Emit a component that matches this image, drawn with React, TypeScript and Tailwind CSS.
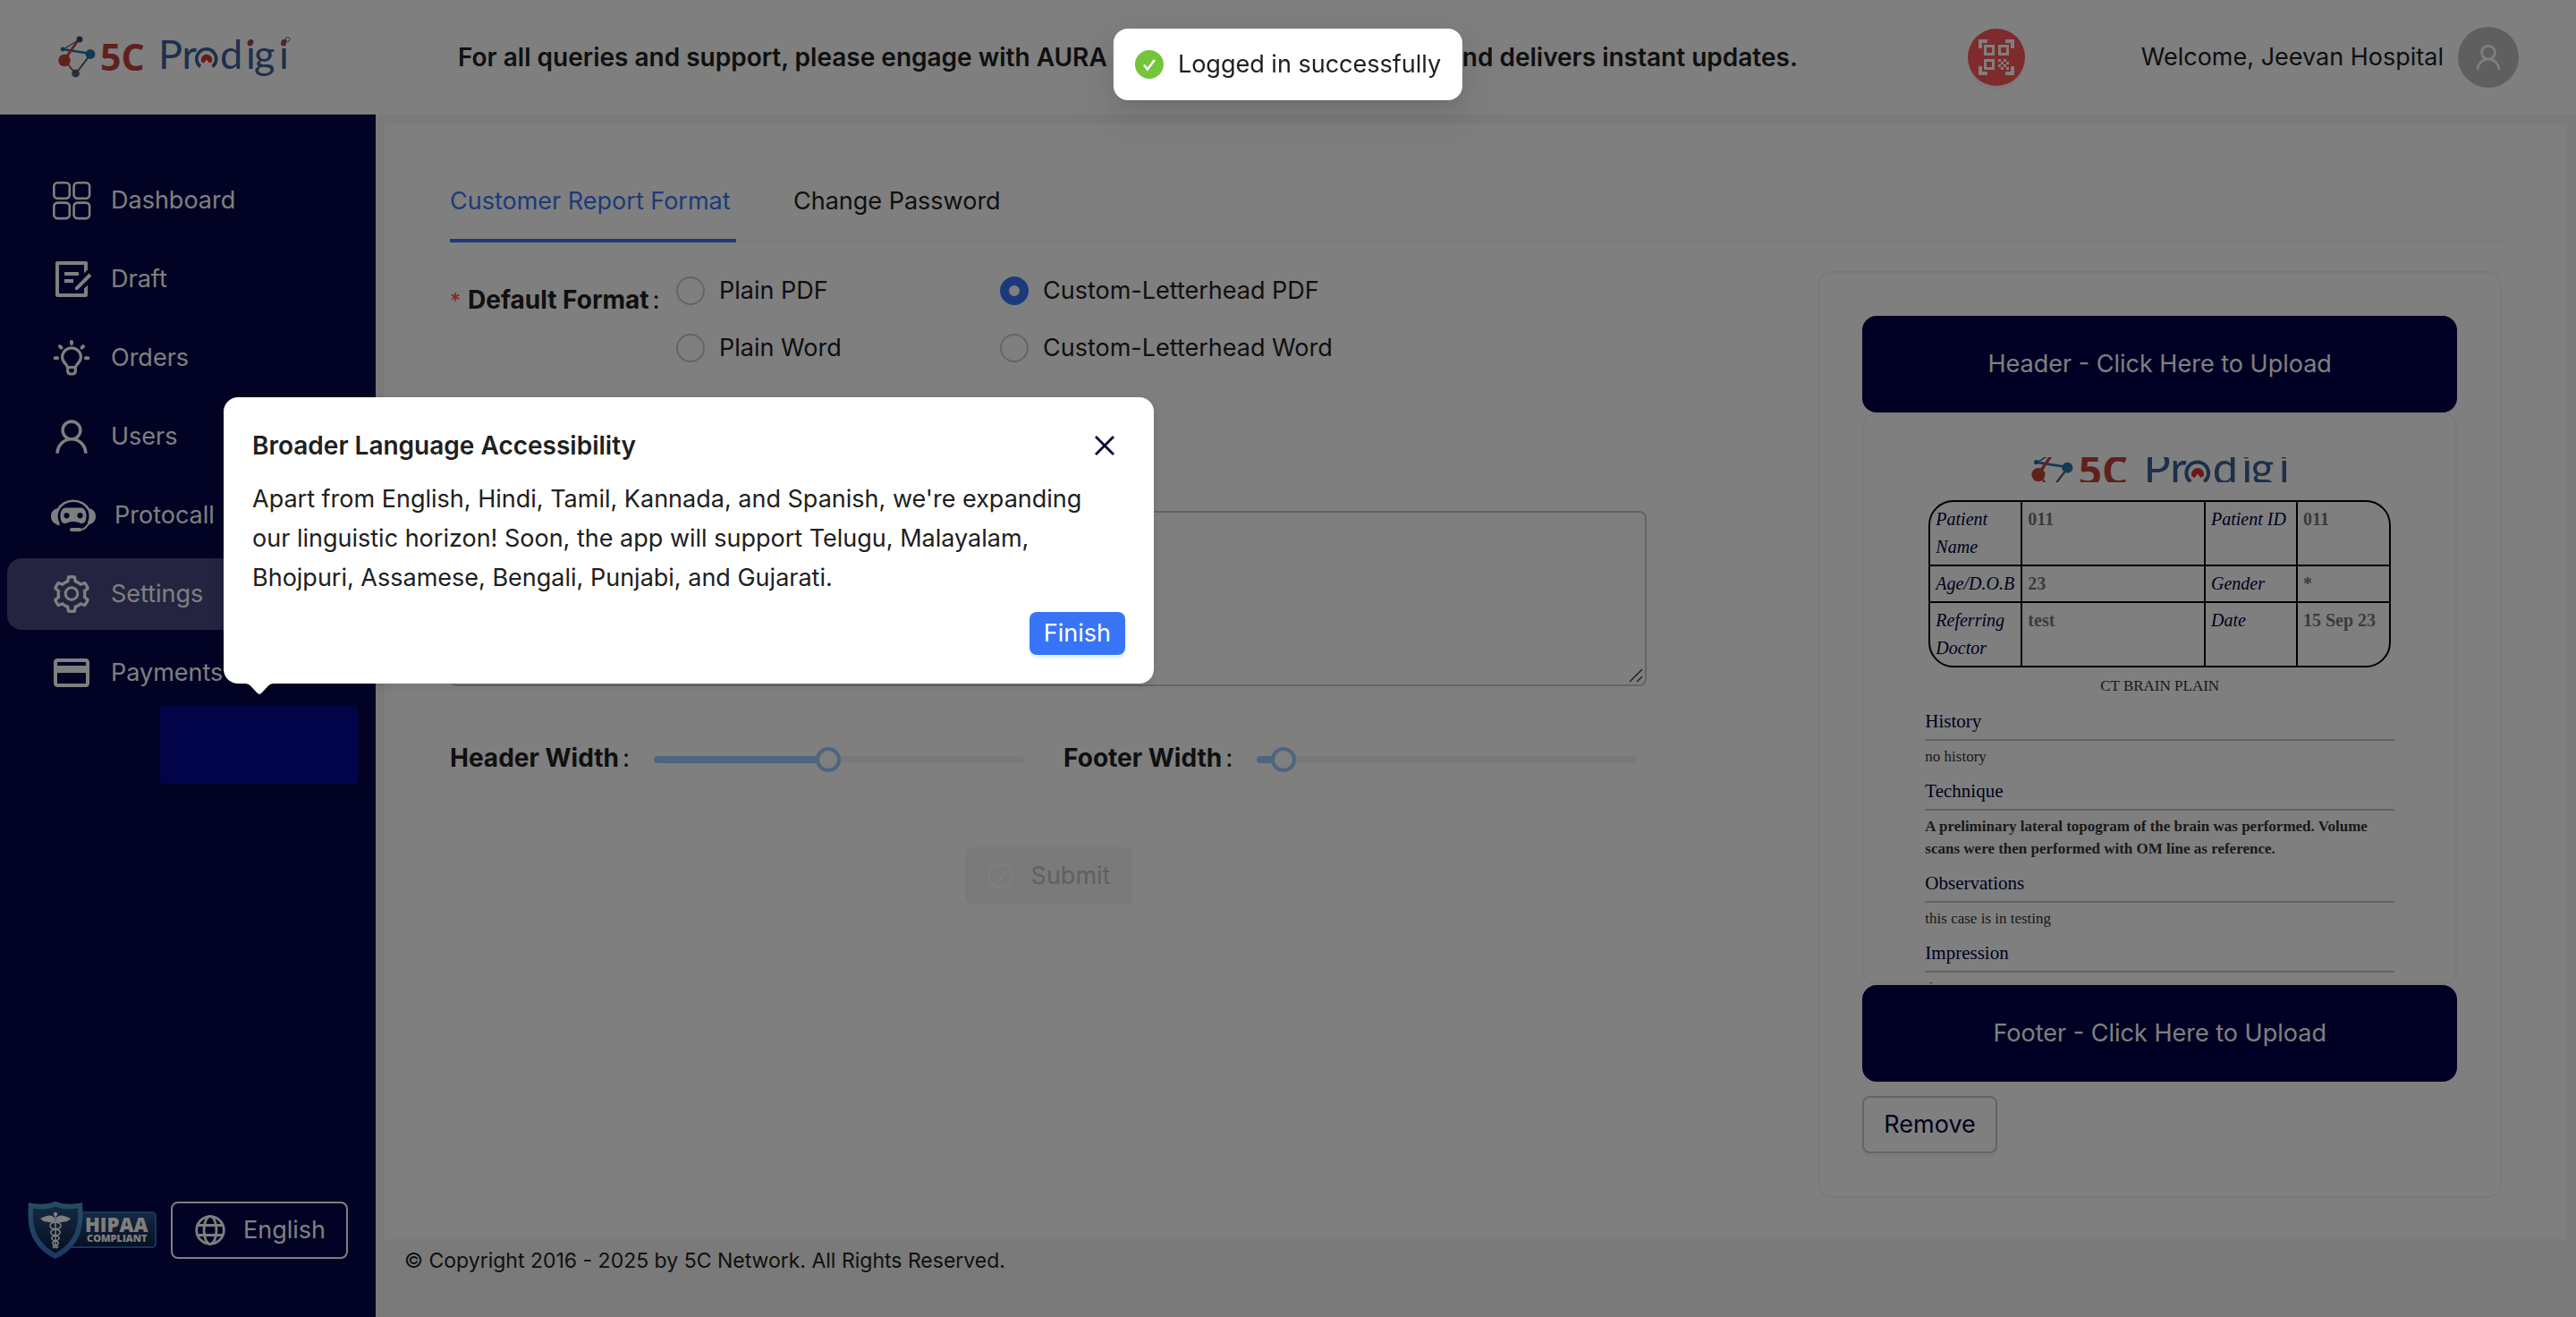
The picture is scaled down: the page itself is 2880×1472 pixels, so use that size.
import React, { useState } from "react";
import { AiOutlineUser, AiOutlineSetting } from "react-icons/ai";
import { MdOutlineCreditCard, MdQrCodeScanner } from "react-icons/md";
import { RiDraftLine } from "react-icons/ri";

function ProdigiMark() {
  return (
    <>
      <path d="M39 20L21 31" stroke="#2a6a96" strokeWidth="1.4" />
      <path d="M20 31L51 36" stroke="#2675ab" strokeWidth="2.4" />
      <path d="M38 20L22 43" stroke="#c9433a" strokeWidth="3" />
      <path d="M22 43L34 58" stroke="#c9433a" strokeWidth="2" />
      <path d="M51 37L35 58" stroke="#555" strokeWidth="2" />
      <circle cx="39" cy="20" r="3.4" fill="#264f78" />
      <circle cx="20" cy="31" r="2.4" fill="#2a6a96" />
      <circle cx="51" cy="36.500" r="5.400" fill="#2675ab" />
      <circle cx="22" cy="43.500" r="6.800" fill="#c1423a" />
      <circle cx="34.500" cy="58" r="4.400" fill="#555c60" />
      <text x="62" y="55" fill="#c1423a" fontFamily="Open Sans, sans-serif" fontWeight="700" fontSize="41">
        5C
      </text>
      <g fill="#3b6196" fontFamily="Lato, sans-serif" fontSize="45">
        <text x="127" y="53">Pr</text>
        <text x="196" y="53">d</text>
        <text x="225" y="53">i</text>
        <text x="234" y="53">g</text>
        <text x="262" y="53">i</text>
      </g>
      <path d="M174 50.500a11 11 0 1 1 13.500 0" fill="none" stroke="#3b6196" strokeWidth="3.600" />
      <path d="M175 45a6.300 6.300 0 1 1 12 0l-3 1.500-3-4-3 4z" fill="#d8332f" />
      <circle cx="229.500" cy="24.500" r="3" fill="#d8332f" />
      <circle cx="267" cy="24.500" r="3" fill="#d8332f" />
    </>
  );
}

function HeaderLogo() {
  return (
    <svg viewBox="0 0 300 80" className="h-20 w-[300px] shrink-0" role="img" aria-label="5C Prodigi">
      <ProdigiMark />
      <circle cx="271.500" cy="20" r="2.500" fill="none" stroke="#444" strokeWidth="0.800" />
    </svg>
  );
}

function GridIcon() {
  return (
    <svg viewBox="0 0 48 48" className="size-12" fill="none" stroke="currentColor" strokeWidth="2.600">
      <rect x="4.300" y="4.300" width="17.500" height="17.500" rx="4" />
      <rect x="26.600" y="4.300" width="17.500" height="17.500" rx="4" />
      <rect x="4.300" y="26.600" width="17.500" height="17.500" rx="4" />
      <rect x="26.600" y="26.600" width="17.500" height="17.500" rx="4" />
    </svg>
  );
}

function BulbIcon() {
  return (
    <svg viewBox="0 0 48 48" className="size-12" fill="none" stroke="currentColor" strokeWidth="3.200">
      <path d="M19.500 34.500C19.500 31 13.600 29.500 13.600 23.300a10.400 10.400 0 0 1 20.800 0c0 6.200-5.900 7.700-5.900 11.200z" strokeLinejoin="round" />
      <path d="M19.700 34.500v4.500a3 3 0 0 0 3 3h2.600a3 3 0 0 0 3-3v-4.500" />
      <path d="M24 6v2M5.700 24.300h2.400M39.900 24.300h2.400M11 11.200l1.500 1.500M37 11.200l-1.500 1.500" strokeWidth="4" strokeLinecap="round" />
    </svg>
  );
}

function RobotIcon() {
  return (
    <svg viewBox="0 0 52 48" className="h-12 w-[52px]" fill="currentColor">
      <path d="M9 17.500A18.500 16 0 0 1 43 17.500" fill="none" stroke="currentColor" strokeWidth="2.600" />
      <path d="M9.500 16C5 16.500 1 19.500 1 25c0 5.500 3.500 8.500 9.500 10.500V32c-1.200-2-1.800-4.500-1.800-7s.6-5 1.800-7zM42.500 16c4.500.5 8.500 3.500 8.500 9 0 5.500-3.500 8.500-8 9.500l-1-3c1-2 1.500-4 1.500-6.500s-.4-5-1.500-7z" />
      <path d="M44 31c-2 6-6 9-12 9.500" fill="none" stroke="currentColor" strokeWidth="2.200" />
      <rect x="22" y="38" width="13" height="4" rx="2" />
      <path fillRule="evenodd" d="M18 15.500h16c4.500 0 6.500 4 6.500 9s-1.500 8.500-5 8.500c-3 0-4-2-9.500-2s-6.500 2-9.500 2c-3.500 0-5-3.500-5-8.500s2-9 6.500-9zm.5 5.500a3.200 3.200 0 1 0 .01 0zm15 0a3.200 3.200 0 1 0 .01 0z" />
    </svg>
  );
}

function GlobeIcon() {
  return (
    <svg viewBox="0 0 34 34" className="size-[34px]" fill="none" stroke="currentColor" strokeWidth="2.800">
      <circle cx="17" cy="17" r="15.300" />
      <ellipse cx="17" cy="17" rx="7" ry="15.300" />
      <path d="M3 11.500h28M3 22.500h28" />
    </svg>
  );
}

function HipaaBadge() {
  return (
    <svg viewBox="0 0 144 66" className="h-[66px] w-36 shrink-0" role="img" aria-label="HIPAA Compliant">
      <defs>
        <linearGradient id="rim" x1="0" y1="0" x2="0" y2="1">
          <stop offset="0" stopColor="#4a9bc4" />
          <stop offset="1" stopColor="#3a6fc8" />
        </linearGradient>
        <linearGradient id="field" x1="0" y1="0" x2="0" y2="1">
          <stop offset="0" stopColor="#2a5488" />
          <stop offset="1" stopColor="#0c1f40" />
        </linearGradient>
      </defs>
      <rect x="42" y="13" width="101" height="39" rx="4" fill="url(#field)" stroke="#2f66b4" strokeWidth="2" />
      <path d="M31 0.500C24 4.500 10 4.500 1 2 0 18 0 32 7 44c6 10 15 17 24 21 9-4 18-11 24-21 7-12 7-26 6-42-9 2.500-23 2.500-30-1.500z" fill="url(#rim)" />
      <path d="M31 6.500C24 9.500 14 10 6 8.500 5.500 21 6 31 12 41c5 8 12 14 19 17.500C38 55 45 49 50 41c6-10 6.500-20 6-32.500-8 1.500-18 1-25-2z" fill="url(#field)" />
      <g stroke="#fff" fill="none" strokeWidth="1.500">
        <path d="M31 15v38" />
        <path d="M31 24c-8 1-8 7 0 8s6 6 0 7-5 5 0 6 4 4 0 5-3 2-1 3M31 24c8 1 8 7 0 8s-6 6 0 7 5 5 0 6-4 4 0 5 3 2 1 3" />
      </g>
      <circle cx="31" cy="15" r="2.200" fill="#fff" />
      <path d="M30 19c-4-4-8-3-16 1 3 3 5 3.500 8 3.500 1 1 5 1 8 0zM32 19c4-4 8-3 16 1-3 3-5 3.500-8 3.500-1 1-5 1-8 0z" fill="#fff" />
      <g fill="#fff" fontFamily="Open Sans, sans-serif" fontWeight="800">
        <text x="64" y="35" fontSize="22">HIPAA</text>
        <text x="66" y="46" fontSize="11">COMPLIANT</text>
      </g>
    </svg>
  );
}

const menu = [
  { label: "Dashboard", icon: <GridIcon /> },
  { label: "Draft", icon: <RiDraftLine size={48} /> },
  { label: "Orders", icon: <BulbIcon /> },
  { label: "Users", icon: <AiOutlineUser size={48} /> },
  { label: "Protocall", icon: <RobotIcon /> },
  { label: "Settings", icon: <AiOutlineSetting size={48} />, active: true },
  { label: "Payments", icon: <MdOutlineCreditCard size={48} /> },
];

function Sidebar() {
  return (
    <aside className="flex w-[420px] shrink-0 flex-col justify-between bg-[#020449] pt-[52px] pb-16 text-white">
      <nav className="flex flex-col gap-2 px-2 pt-1">
        {menu.map((item) => (
          <a
            key={item.label}
            href={"#" + item.label.toLowerCase()}
            className={
              item.active
                ? "flex h-20 items-center gap-5 rounded-2xl bg-[#484880] pl-12"
                : "flex h-20 items-center gap-5 rounded-2xl pl-12"
            }
          >
            {item.icon}
            <span>{item.label}</span>
          </a>
        ))}
      </nav>
      <div className="flex items-center gap-4 pl-[31px]">
        <HipaaBadge />
        <button type="button" className="flex h-16 w-[198px] items-center gap-5 rounded-lg border-2 border-white pl-[25px]">
          <GlobeIcon />
          English
        </button>
      </div>
    </aside>
  );
}

function Header() {
  return (
    <header className="flex h-32 items-center bg-white pr-16 pl-[50px]">
      <HeaderLogo />
      <p className="ml-[162px] text-[28px] font-semibold whitespace-nowrap">
        For all queries and support, please engage with AURA - our AI agent that resolves and delivers instant updates.
      </p>
      <button
        type="button"
        aria-label="Scan QR code"
        className="ml-auto flex size-16 items-center justify-center rounded-full bg-[#fa5659] text-white shadow-[0_4px_0_rgba(255,38,5,0.06)]"
      >
        <MdQrCodeScanner size={48} />
      </button>
      <span className="ml-[130px] whitespace-nowrap">Welcome, Jeevan Hospital</span>
      <button type="button" aria-label="Account" className="ml-4 flex size-[68px] items-center justify-center rounded-full bg-[#bfbfbf] text-white">
        <AiOutlineUser size={36} />
      </button>
    </header>
  );
}

const formats = ["Plain PDF", "Custom-Letterhead PDF", "Plain Word", "Custom-Letterhead Word"];

function FormatPicker() {
  const [format, setFormat] = useState(formats[1]);
  return (
    <fieldset className="flex">
      <legend className="float-left w-[253px] text-[28px] leading-16 font-bold">
        <span className="mr-2 text-2xl font-normal text-[#ff4d4f]">*</span>
        Default Format
        <span className="ml-1 font-normal">:</span>
      </legend>
      <div className="grid grid-cols-[362px_auto] gap-y-5">
        {formats.map((name) => (
          <label key={name} className="flex items-center gap-4 leading-11">
            <input
              type="radio"
              name="format"
              checked={format === name}
              onChange={() => setFormat(name)}
              className="size-8 appearance-none rounded-full border-2 border-[#c8c8c8] bg-white checked:border-[10px] checked:border-[#3875f6]"
            />
            {name}
          </label>
        ))}
      </div>
    </fieldset>
  );
}

function WidthSlider({ id, label, initial, labelClass }: { id: string; label: string; initial: number; labelClass: string }) {
  const [value, setValue] = useState(initial);
  return (
    <div className="flex h-16 items-center">
      <label htmlFor={id} className={labelClass}>
        {label}
        <span className="ml-1 font-normal">:</span>
      </label>
      <input
        id={id}
        type="range"
        min={0}
        max={100}
        value={value}
        onChange={(e) => setValue(Number(e.target.value))}
        style={{ backgroundImage: `linear-gradient(to right, #9bcaff ${value}%, #f3f3f3 ${value}%)` }}
        className="mt-1 h-2 min-w-0 flex-1 appearance-none rounded-full [&::-webkit-slider-thumb]:size-7 [&::-webkit-slider-thumb]:appearance-none [&::-webkit-slider-thumb]:rounded-full [&::-webkit-slider-thumb]:border-4 [&::-webkit-slider-thumb]:border-[#9bcaff] [&::-webkit-slider-thumb]:bg-white"
      />
    </div>
  );
}

function SettingsForm() {
  return (
    <form className="w-7/12">
      <FormatPicker />
      <div className="relative mt-40">
        <textarea
          aria-label="Signature"
          className="block h-[196px] w-full resize-none rounded-lg border-2 border-[#c8c8c8] bg-white"
        />
        <svg viewBox="0 0 20 20" className="absolute right-0.5 bottom-0.5 size-5" stroke="#444" strokeWidth="1.500">
          <path d="M3 17L17 3M11 17l6-6" />
        </svg>
      </div>
      <div className="mt-12 grid grid-cols-2 gap-x-11 pr-2.5">
        <WidthSlider id="header-width" label="Header Width" initial={47} labelClass="w-[228px] shrink-0 text-[28px] font-bold" />
        <WidthSlider id="footer-width" label="Footer Width" initial={4} labelClass="w-[216px] shrink-0 text-[28px] font-bold" />
      </div>
      <div className="mt-17 flex justify-center">
        <button type="submit" disabled className="flex h-16 w-[187px] items-center gap-[18px] rounded-lg border-2 border-[#f3f3f3] bg-[#f5f5f5] pl-[22px] text-[#c0c0c0]">
          <svg viewBox="0 0 32 32" className="size-8" fill="none" stroke="#fff" strokeWidth="2">
            <circle cx="16" cy="16" r="13.500" />
            <path d="M10.500 16l4 5 7-10" />
          </svg>
          Submit
        </button>
      </div>
    </form>
  );
}

const patientRows = [
  ["Patient Name", "011", "Patient ID", "011"],
  ["Age/D.O.B", "23", "Gender", "*"],
  ["Referring Doctor", "test", "Date", "15 Sep 23"],
];

const sections = [
  { title: "History", body: "no history" },
  {
    title: "Technique",
    body: "A preliminary lateral topogram of the brain was performed. Volume scans were then performed with OM line as reference.",
    bold: true,
  },
  { title: "Observations", body: "this case is in testing" },
  { title: "Impression", body: "this case is in testing" },
];

function ReportPreview() {
  return (
    <div className="h-[640px] overflow-hidden rounded-2xl border-2 border-[#f5f5f5] px-[68px] pt-12 font-[Liberation_Serif,serif]">
      <svg viewBox="15 26 257 25" className="mx-auto h-7 w-[288px]" role="img" aria-label="5C Prodigi">
        <ProdigiMark />
      </svg>
      <div className="mx-1 mt-5 overflow-hidden rounded-[28px] border-2 border-black">
        <table className="w-full table-fixed border-collapse text-xl leading-[31px]">
          <colgroup>
            <col className="w-[102px]" />
            <col />
            <col className="w-[103px]" />
            <col className="w-[103px]" />
          </colgroup>
          <tbody>
            {patientRows.map((row) => (
              <tr key={row[0]} className="border-b-2 border-black last:border-b-0">
                {row.map((cell, i) =>
                  i % 2 === 0 ? (
                    <th key={i} scope="row" className="border-r-2 border-black py-1 pl-1.5 text-left align-top font-normal text-[#000038] italic">
                      {cell}
                    </th>
                  ) : (
                    <td key={i} className="border-r-2 border-black py-1 pl-1.5 align-top font-bold text-[#777] last:border-r-0">
                      {cell}
                    </td>
                  ),
                )}
              </tr>
            ))}
          </tbody>
        </table>
      </div>
      <p className="mt-2 text-center text-[17px] leading-[25px] text-[#333]">CT BRAIN PLAIN</p>
      <div className="mt-[11px] flex flex-col gap-2.5">
        {sections.map((s) => (
          <section key={s.title}>
            <h3 className="border-b-2 border-[#c8c8c8] pb-[3px] text-[21px] leading-[33px] text-[#000038]">{s.title}</h3>
            <p
              className={
                s.bold
                  ? "mt-[5px] text-[17px] leading-[25px] font-bold text-[#333]"
                  : "mt-[5px] text-[17px] leading-[25px] text-[#333]"
              }
            >
              {s.body}
            </p>
          </section>
        ))}
      </div>
    </div>
  );
}

function LetterheadCard() {
  return (
    <section className="w-1/3 rounded-2xl border-2 border-[#f3f3f3] p-12">
      <button type="button" className="block h-27 w-full rounded-2xl bg-[#000048] text-white">
        Header - Click Here to Upload
      </button>
      <ReportPreview />
      <button type="button" className="block h-27 w-full rounded-2xl bg-[#000048] text-white">
        Footer - Click Here to Upload
      </button>
      <button type="button" className="mt-4 block h-16 rounded-lg border-2 border-[#c8c8c8] px-[22px] text-[#000038] shadow-[0_4px_0_rgba(5,85,255,0.06)]">
        Remove
      </button>
    </section>
  );
}

function Content() {
  return (
    <div className="flex min-w-0 flex-1 flex-col">
      <main className="mx-2.5 mt-2.5 flex-1 bg-white px-[73px] pt-[41px] pb-11">
        <div role="tablist" className="flex gap-16 border-b-2 border-[#f3f3f3]">
          <button
            type="button"
            role="tab"
            aria-selected="true"
            className="-mb-0.5 w-80 border-b-4 border-[#3875f6] pt-6 pb-5 text-left leading-11 whitespace-nowrap text-[#3875f6]"
          >
            Customer Report Format
          </button>
          <button type="button" role="tab" aria-selected="false" className="-mb-0.5 border-b-4 border-transparent pt-6 pb-5 leading-11">
            Change Password
          </button>
        </div>
        <div className="mt-8 flex items-start justify-between">
          <SettingsForm />
          <LetterheadCard />
        </div>
      </main>
      <footer className="h-[87px] px-8 text-[23px] leading-12">© Copyright 2016 - 2025 by 5C Network. All Rights Reserved.</footer>
    </div>
  );
}

function Toast() {
  return (
    <div role="status" className="fixed top-8 left-1/2 z-30 flex h-20 -translate-x-1/2 items-center gap-4 rounded-2xl bg-white px-6 whitespace-nowrap shadow-[0_12px_32px_rgba(0,0,0,0.08),0_6px_12px_-8px_rgba(0,0,0,0.12),0_18px_56px_16px_rgba(0,0,0,0.05)]">
      <svg viewBox="0 0 32 32" className="size-8" fill="none">
        <circle cx="16" cy="16" r="16" fill="#73c53c" />
        <path d="M10 16.500l4 5 8-10.500" stroke="#fff" strokeWidth="2.600" />
      </svg>
      Logged in successfully
    </div>
  );
}

function Tour() {
  return (
    <>
      <div className="pointer-events-none absolute top-[788px] left-[179px] z-10 h-22 w-[221px] rounded shadow-[0_0_0_9999px_rgba(0,0,0,0.5)]" />
      <div role="dialog" aria-labelledby="tour-title" className="absolute top-[444px] left-[250px] z-20 w-[1040px] rounded-2xl bg-white px-8 pt-8 pb-8 leading-11 shadow-[0_2px_12px_rgba(0,0,0,0.1)]">
        <div className="flex items-center justify-between">
          <h2 id="tour-title" className="text-[28px] leading-11 font-semibold">
            Broader Language Accessibility
          </h2>
          <button type="button" aria-label="Close" className="mr-3 text-[#000030]">
            <svg viewBox="0 0 22 22" className="size-[22px]" fill="none" stroke="currentColor" strokeWidth="2.800">
              <path d="M1 1l20 20M21 1L1 21" />
            </svg>
          </button>
        </div>
        <p className="mt-4">
          Apart from English, Hindi, Tamil, Kannada, and Spanish, we're expanding our linguistic horizon! Soon, the app will support Telugu, Malayalam,
          Bhojpuri, Assamese, Bengali, Punjabi, and Gujarati.
        </p>
        <div className="mt-4 flex justify-end">
          <button type="button" className="h-12 rounded-lg bg-[#3875f6] px-4 leading-12 text-white shadow-[0_4px_0_rgba(5,145,255,0.1)]">
            Finish
          </button>
        </div>
        <svg viewBox="0 0 32 12" className="absolute top-full left-6 h-3 w-8" fill="#fff">
          <path d="M0 0h32c-3 0-5 1.500-7 3.500l-6.500 7a3.500 3.500 0 0 1-5 0L7 3.500C5 1.500 3 0 0 0z" />
        </svg>
      </div>
    </>
  );
}

export default function App() {
  return (
    <div className="relative flex min-h-screen flex-col overflow-hidden bg-[#f5f5f5] font-[Inter,sans-serif] text-[27px] leading-11 text-[#202020]">
      <Header />
      <div className="flex flex-1">
        <Sidebar />
        <Content />
      </div>
      <Tour />
      <Toast />
    </div>
  );
}
